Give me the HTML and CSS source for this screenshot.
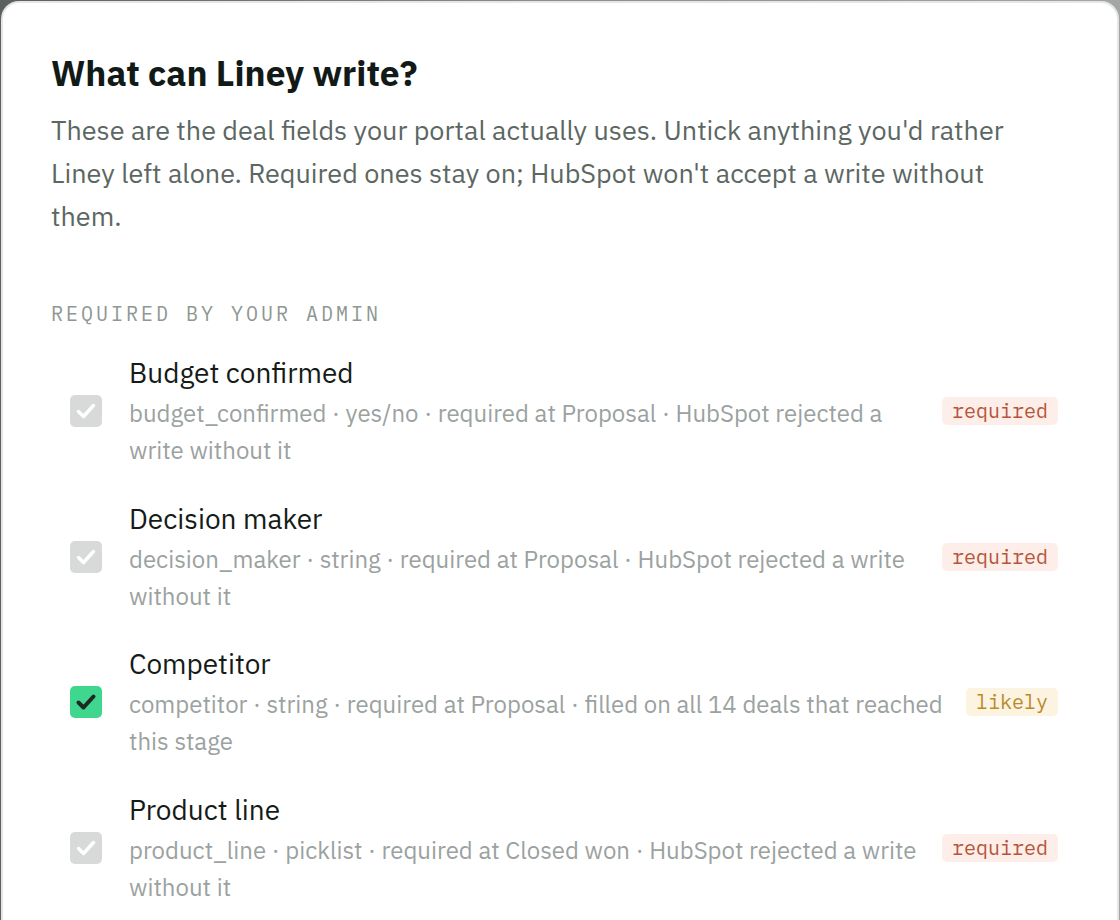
FILE: index.html
```html
<!DOCTYPE html>
<html lang="en">
<head>
<meta charset="utf-8">
<title>What can Liney write?</title>
<link rel="stylesheet" href="styles.css">
</head>
<body>
<div class="modal">
  <h1 class="title">What can Liney write?</h1>
  <p class="intro">These are the deal fields your portal actually uses. Untick anything you'd rather Liney left alone. Required ones stay on; HubSpot won't accept a write without them.</p>

  <div class="section-label">REQUIRED BY YOUR ADMIN</div>

  <div class="fields">
    <div class="row">
      <span class="check check-locked">
        <svg viewBox="0 0 32 32" width="32" height="32"><path d="M8.5 16.5 L13.5 21.5 L23.5 10.5" fill="none" stroke="#ffffff" stroke-width="3.4" stroke-linecap="round" stroke-linejoin="round"/></svg>
      </span>
      <div class="field">
        <div class="field-name">Budget confirmed</div>
        <div class="field-meta">budget_confirmed · yes/no · required at Proposal · HubSpot rejected a write without it</div>
      </div>
      <span class="badge badge-required">required</span>
    </div>

    <div class="row">
      <span class="check check-locked">
        <svg viewBox="0 0 32 32" width="32" height="32"><path d="M8.5 16.5 L13.5 21.5 L23.5 10.5" fill="none" stroke="#ffffff" stroke-width="3.4" stroke-linecap="round" stroke-linejoin="round"/></svg>
      </span>
      <div class="field">
        <div class="field-name">Decision maker</div>
        <div class="field-meta">decision_maker · string · required at Proposal · HubSpot rejected a write without it</div>
      </div>
      <span class="badge badge-required">required</span>
    </div>

    <div class="row">
      <span class="check check-on">
        <svg viewBox="0 0 32 32" width="32" height="32"><path d="M8.5 16.5 L13.5 21.5 L23.5 10.5" fill="none" stroke="#1f2823" stroke-width="4" stroke-linecap="round" stroke-linejoin="round"/></svg>
      </span>
      <div class="field">
        <div class="field-name">Competitor</div>
        <div class="field-meta">competitor · string · required at Proposal · filled on all 14 deals that reached this stage</div>
      </div>
      <span class="badge badge-likely">likely</span>
    </div>

    <div class="row">
      <span class="check check-locked">
        <svg viewBox="0 0 32 32" width="32" height="32"><path d="M8.5 16.5 L13.5 21.5 L23.5 10.5" fill="none" stroke="#ffffff" stroke-width="3.4" stroke-linecap="round" stroke-linejoin="round"/></svg>
      </span>
      <div class="field">
        <div class="field-name">Product line</div>
        <div class="field-meta">product_line · picklist · required at Closed won · HubSpot rejected a write without it</div>
      </div>
      <span class="badge badge-required">required</span>
    </div>
  </div>
</div>
</body>
</html>
```

FILE: styles.css
```css
html, body {
  margin: 0;
  padding: 0;
}

body {
  background: linear-gradient(90deg, #5c615e 0%, #8a8e8c 50%, #a3a6a5 100%);
  font-family: "IBM Plex Sans", Roboto, "Noto Sans", sans-serif;
  height: 920px;
  overflow: hidden;
}

.modal {
  margin: 1px 1px 0 1px;
  background: #ffffff;
  border: 2px solid #e4e7e6;
  border-bottom: none;
  border-radius: 18px 18px 0 0;
  padding: 50px 59px 0 48px;
  height: 940px;
  box-sizing: border-box;
}

.title {
  margin: 0;
  font-size: 35.3px;
  line-height: 40px;
  font-weight: 700;
  color: #111a17;
}

.intro {
  margin: 15px 0 0 0;
  font-size: 27px;
  line-height: 43px;
  color: #5c6762;
}

.section-label {
  margin-top: 65px;
  font-family: "IBM Plex Mono", "DejaVu Sans Mono", "Liberation Mono", monospace;
  font-size: 20px;
  line-height: 24px;
  letter-spacing: 3px;
  color: #8e9792;
}

.fields {
  margin-top: 13px;
}

.row {
  display: flex;
  align-items: center;
  padding: 14px 0 15.67px 19px;
}

.check {
  flex: 0 0 32px;
  width: 32px;
  height: 32px;
  border-radius: 5px;
  display: flex;
  align-items: center;
  justify-content: center;
  margin-right: 27px;
}

.check svg {
  display: block;
}

.check-locked {
  background: #d8dad9;
}

.check-on {
  background: #3fd68d;
}

.field {
  flex: 1 1 auto;
  min-width: 0;
}

.field-name {
  font-size: 28px;
  line-height: 40px;
  color: #151b18;
  margin-bottom: 2px;
}

.field-meta {
  font-size: 24px;
  line-height: 37px;
  color: #9ba29f;
}

.badge {
  flex: 0 0 auto;
  margin-left: 20px;
  font-family: "IBM Plex Mono", "DejaVu Sans Mono", "Liberation Mono", monospace;
  font-size: 20px;
  line-height: 28px;
  padding: 0 10px;
  border-radius: 5px;
}

.badge-required {
  background: #fdeee9;
  color: #b5553a;
}

.badge-likely {
  background: #fdf3e1;
  color: #b98a2b;
}
```
